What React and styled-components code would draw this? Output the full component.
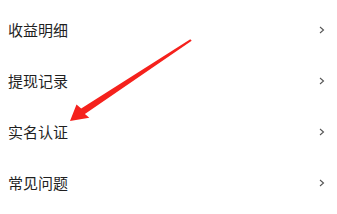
import React from 'react';
import styled, { createGlobalStyle } from 'styled-components';

const GlobalStyle = createGlobalStyle`
  html, body {
    margin: 0;
    padding: 0;
    background: #ffffff;
  }
  body {
    font-family: "Noto Sans CJK SC", "Noto Sans", sans-serif;
  }
`;

const items = ['收益明细', '提现记录', '实名认证', '常见问题'];

const App = () => {
  return (
    <>
      <GlobalStyle />
      <Page>
        <Menu>
          {items.map((label) => (
            <Row key={label}>
              <Label>{label}</Label>
              <Chevron viewBox='0 0 6 8'>
                <polyline points='1,1 4.5,4 1,7' />
              </Chevron>
            </Row>
          ))}
        </Menu>
        <Pointer viewBox='0 0 337 214'>
          <polygon points='70,121 76.5,104.5 81.2,108.4 190.3,39.3 191.7,40.7 84.9,114 89.3,117.8' />
        </Pointer>
      </Page>
    </>
  );
};

const Page = styled.div`
  position: relative;
  width: 337px;
  height: 214px;
  overflow: hidden;
  background: #fff;
`;

const Menu = styled.div`
  display: flex;
  flex-direction: column;
  padding-top: 4px;
`;

const Row = styled.div`
  display: flex;
  align-items: center;
  justify-content: space-between;
  height: 51px;
  padding: 0 12px 0 8px;
`;

const Label = styled.span`
  font-size: 15px;
  line-height: 20px;
  color: #1f1f1f;
`;

const Chevron = styled.svg`
  width: 6px;
  height: 8px;
  fill: none;
  stroke: #555;
  stroke-width: 1.1;
`;

const Pointer = styled.svg`
  position: absolute;
  left: 0;
  top: 0;
  width: 337px;
  height: 214px;
  fill: #f5211c;
`;

export default App;
